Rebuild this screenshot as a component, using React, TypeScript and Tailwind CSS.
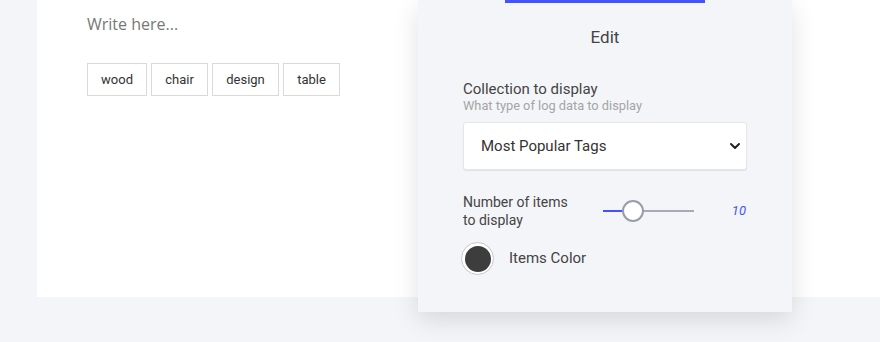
import { ChevronDown } from "lucide-react";

const tags = [
    { label: "wood", w: "w-[60px]" },
    { label: "chair", w: "w-[57px]" },
    { label: "design", w: "w-[67px]" },
    { label: "table", w: "w-[57px]" },
];

function EditPanel() {
    return (
        <div className="absolute left-[418px] top-0 w-[374px] h-[312px] bg-[#f4f5f9] shadow-[0_8px_24px_rgba(0,0,0,0.12)] font-['Roboto',sans-serif]">
            <div className="ml-[87px] w-[200px] h-[3px] bg-[#4353ff]" />
            <h2 className="text-center text-[17px] text-[#444] mt-[24px] leading-5">
                Edit
            </h2>
            <div className="px-[45px] mt-[33px]">
                <div className="text-[15px] text-[#444] leading-[18px]">
                    Collection to display
                </div>
                <div className="text-[12.8px] text-[#a5a5a5] leading-[15px]">
                    What type of log data to display
                </div>
                <div className="mt-[9px] h-[48px] bg-white rounded-[3px] border border-[#e6e6e6] shadow-[0_1px_1px_rgba(0,0,0,0.08)] flex items-center justify-between pl-[17px] pr-[3px]">
                    <span className="text-[15px] text-[#333]">Most Popular Tags</span>
                    <ChevronDown className="w-4 h-4 text-[#222]" strokeWidth={3} />
                </div>
                <div className="mt-[23px] flex items-center">
                    <div className="w-[120px] text-[14px] leading-[18px] text-[#444]">
                        Number of items
                        <br />
                        to display
                    </div>
                    <div className="relative ml-[20px] w-[91px] h-[22px] flex items-center">
                        <div className="h-[2px] w-full bg-[#a8aab8]" />
                        <div className="absolute left-0 h-[2px] w-[20px] bg-[#4353ff]" />
                        <div className="absolute left-[19px] w-[22px] h-[22px] rounded-full bg-white border-2 border-[#9a9ca6]" />
                    </div>
                    <div className="ml-auto text-[13px] italic text-[#4353ff] pr-[1px]">
                        10
                    </div>
                </div>
                <div className="mt-[13px] flex items-center -ml-[2px]">
                    <div className="w-[33px] h-[33px] rounded-full bg-white border border-[#c8c8c8] flex items-center justify-center">
                        <div className="w-[26px] h-[26px] rounded-full bg-[#3d3d3d]" />
                    </div>
                    <span className="ml-[15px] text-[15px] text-[#444]">Items Color</span>
                </div>
            </div>
        </div>
    );
}

export default function App() {
    return (
        <div className="relative w-[880px] h-[342px] bg-[#f4f5f9] overflow-hidden">
            <div className="ml-[37px] h-[297px] bg-white pl-[50px] pt-[13px]">
                <div className="text-[16px] text-[#777] font-['Open_Sans',sans-serif] leading-[22px]">
                    Write here...
                </div>
                <div className="mt-[28px] flex gap-[4px] font-['Roboto',sans-serif]">
                    {tags.map((t) => (
                        <div
                            key={t.label}
                            className={`${t.w} h-[33px] border border-[#d9d9d9] flex items-center justify-center text-[13px] text-[#333]`}
                        >
                            {t.label}
                        </div>
                    ))}
                </div>
            </div>
            <EditPanel />
        </div>
    );
}
